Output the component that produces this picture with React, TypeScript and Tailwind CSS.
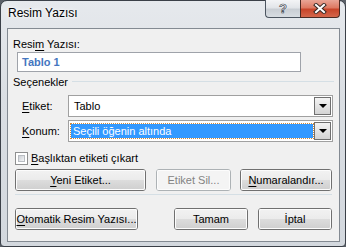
import type { ReactNode } from 'react';

function U({ children }: { children: ReactNode }) {
  return <span className="underline underline-offset-[2px] decoration-1">{children}</span>;
}

function Btn({ width, disabled, children }: { width: string; disabled?: boolean; children: ReactNode }) {
  return (
    <div
      className={`${width} h-[22px] rounded-[3px] border ${
        disabled ? 'border-[#adb2b5]' : 'border-[#707070]'
      }`}
    >
      <div
        className={`h-full w-full rounded-[2px] flex items-center justify-center shadow-[inset_0_0_0_1px_#fcfcfc] ${
          disabled
            ? 'bg-[#f4f4f4] text-[#838383]'
            : 'bg-[linear-gradient(#f2f2f2_0%,#ebebeb_50%,#dddddd_50%,#cfcfcf_100%)] text-black'
        }`}
      >
        {children}
      </div>
    </div>
  );
}

function Combo({ value, selected }: { value: string; selected?: boolean }) {
  return (
    <div className="w-[265px] h-[22px] border border-[#a0a0a0] bg-white flex p-px">
      <div className="flex-1 flex items-center pl-px pr-px">
        {selected ? (
          <div className="w-full h-[14px] bg-[#3399ff] text-white outline outline-1 outline-dotted outline-[#d08a3a] flex items-center pl-[2px]">
            {value}
          </div>
        ) : (
          <span className="pl-[3px]">{value}</span>
        )}
      </div>
      <div className="w-[17px] h-full border border-[#6f6f6f] bg-[linear-gradient(#f4f4f4,#d4d4d4)] flex items-center justify-center">
        <div className="w-0 h-0 border-l-[4px] border-r-[4px] border-t-[4px] border-l-transparent border-r-transparent border-t-black" />
      </div>
    </div>
  );
}

export default function App() {
  return (
    <div className="w-[346px] h-[247px] bg-[#5b6068] overflow-hidden font-['Liberation_Sans',Arial,sans-serif] text-[11px] leading-[13px] text-black">
      <div className="w-full h-full rounded-t-[7px] rounded-b-[4px] border border-[#3b4048] bg-[linear-gradient(180deg,#e6e9ed_0%,#dadee3_40%,#d3d8de_100%)] flex flex-col pl-[6px] pr-[5px] pb-[4px]">
        {/* Title bar */}
        <div className="h-[27px] flex items-start justify-between">
          <div className="pl-px mt-[5px] text-[12px] leading-[15px] [text-shadow:0_0_6px_#ffffff,0_0_3px_#ffffff]">
            Resim Yazısı
          </div>
          <div className="flex -mt-px">
            <div className="w-[35px] h-[18px] rounded-bl-[4px] border border-[#4c5560] border-t-0 border-r-0 bg-[linear-gradient(#f3f4f6_0%,#e2e5e9_45%,#c9ced4_55%,#d8dde2_100%)] flex items-center justify-center">
              <span className="text-[13px] leading-[13px] font-bold text-white [-webkit-text-stroke:0.7px_#3f4650]">?</span>
            </div>
            <div className="w-[40px] h-[18px] rounded-br-[4px] border border-[#4c2a22] border-t-0 bg-[linear-gradient(#e9a596_0%,#de7a63_45%,#c8452a_55%,#d4674b_100%)] flex items-center justify-center">
              <svg width="14" height="11" viewBox="0 0 14 11">
                <path d="M3 2 L11 9 M11 2 L3 9" stroke="#3a2a26" strokeWidth="4" strokeLinecap="square" />
                <path d="M3 2 L11 9 M11 2 L3 9" stroke="#ffffff" strokeWidth="2" strokeLinecap="square" />
              </svg>
            </div>
          </div>
        </div>

        {/* Client area */}
        <div className="flex-1 border border-[#838a92] bg-[#f0f0f0] flex flex-col">
          <div className="ml-[5px] mt-[9px]">
            Resi<U>m</U> Yazısı:
          </div>
          <div className="ml-[9px] mt-px w-[284px] h-[20px] border border-[#9fa3aa] bg-white flex items-center pl-[4px] font-bold text-[#4576c0]">
            Tablo 1
          </div>

          <div className="mt-[4px] flex items-start">
            <span className="ml-[5px]">Seçenekler</span>
            <div className="flex-1 h-px bg-[#d5dfe5] mt-[5px] ml-[4px] mr-[5px]" />
          </div>

          <div className="mt-[6px] flex items-center h-[22px]">
            <span className="ml-[14px] w-[46px]">
              <U>E</U>tiket:
            </span>
            <Combo value="Tablo" />
          </div>
          <div className="mt-[3px] flex items-center h-[22px]">
            <span className="ml-[14px] w-[46px]">
              <U>K</U>onum:
            </span>
            <Combo value="Seçili öğenin altında" selected />
          </div>

          <div className="mt-[10px] flex items-center h-[13px]">
            <div className="ml-[7px] w-[13px] h-[13px] border border-[#8e8f8f] bg-white p-[2px]">
              <div className="w-full h-full bg-[linear-gradient(135deg,#cbcfd5,#f5f6f7)] border border-[#b9bdc2]" />
            </div>
            <span className="ml-[3px]">
              <U>B</U>aşlıktan etiketi çıkart
            </span>
          </div>

          <div className="mt-[4px] flex">
            <div className="ml-[7px]">
              <Btn width="w-[131px]">
                <span>
                  <U>Y</U>eni Etiket...
                </span>
              </Btn>
            </div>
            <div className="ml-[10px]">
              <Btn width="w-[75px]" disabled>
                Etiket Sil...
              </Btn>
            </div>
            <div className="ml-[9px]">
              <Btn width="w-[92px]">
                <span>
                  <U>N</U>umaralandır...
                </span>
              </Btn>
            </div>
          </div>

          <div className="mt-[3px] ml-[7px] w-[317px] h-px bg-[#d5dfe5]" />

          <div className="mt-[13px] flex">
            <div className="ml-[7px]">
              <Btn width="w-[123px]">
                <span>
                  <U>O</U>tomatik Resim Yazısı...
                </span>
              </Btn>
            </div>
            <div className="ml-[36px]">
              <Btn width="w-[74px]">Tamam</Btn>
            </div>
            <div className="ml-[10px]">
              <Btn width="w-[74px]">İptal</Btn>
            </div>
          </div>
        </div>
      </div>
    </div>
  );
}
